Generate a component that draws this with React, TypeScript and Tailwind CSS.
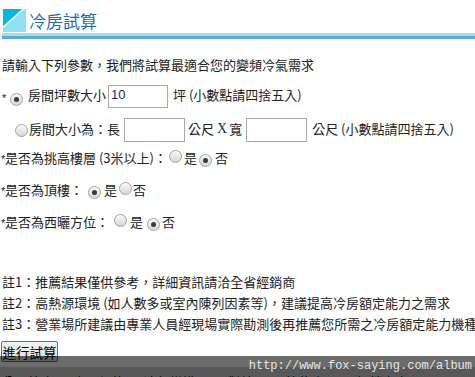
import React from "react";

const Radio = ({ checked }: { checked?: boolean }) => (
  <span className="inline-flex w-[13px] h-[13px] shrink-0 items-center justify-center rounded-full border border-[#a3a3a3] bg-linear-to-b from-[#fbfbfb] to-[#d6d6d6]">
    {checked && <span className="block w-[5px] h-[5px] rounded-full bg-[#3a3a3a]" />}
  </span>
);

const Star = () => (
  <span className="text-[11px] leading-[11px] w-[4px] mt-[3px] text-[#222] font-['Liberation_Sans',sans-serif]">*</span>
);

const Box = ({ value, w }: { value?: string; w: string }) => (
  <input
    readOnly
    value={value ?? ""}
    className={`${w} h-[23px] shrink-0 border border-[#a9a9a9] bg-white px-[2px] pb-[4px] text-[13px] text-[#102a6e] font-['Liberation_Sans',sans-serif] outline-none`}
  />
);

export default function App() {
  return (
    <div className="relative w-[475px] h-[377px] overflow-hidden bg-white text-[13px] text-[#222] font-['Noto_Sans_CJK_TC','Noto_Sans',sans-serif] whitespace-nowrap">
      {/* header */}
      <div className="flex items-start h-[33px] pt-[9px] pl-[3px]">
        <svg width="23" height="23" viewBox="0 0 23 23" className="shrink-0">
          <rect x="0" y="0" width="23" height="23" fill="#8fe0f4" />
          <polygon points="0,0 19,0 0,17" fill="#02b8e3" />
          <line x1="20.5" y1="0" x2="0" y2="18.5" stroke="#ffffff" strokeWidth="1.2" />
        </svg>
        <span className="ml-[3px] mt-[2px] text-[17px] leading-[20px] text-[#1e6db3]">冷房試算</span>
      </div>
      <div className="ml-[2px] h-[3px] bg-[#a8dcea]" />
      <div className="ml-[2px] h-[3px] bg-[#5aaad3]" />

      {/* row 1 */}
      <div className="mt-[16px] h-[20px] flex items-center pl-[2px] leading-[20px]">
        請輸入下列參數，我們將試算最適合您的變頻冷氣需求
      </div>

      {/* row 2 */}
      <div className="mt-[10px] h-[23px] flex items-center pl-[2px] leading-[18px]">
        <Star />
        <span className="ml-[4px]"><Radio checked /></span>
        <span className="ml-[5px] mb-[4px]">房間坪數大小</span>
        <span className="ml-[2px]"><Box w="w-[60px]" value="10" /></span>
        <span className="ml-[5px] mb-[4px]">坪 (小數點請四捨五入)</span>
      </div>

      {/* row 3 */}
      <div className="mt-[10px] h-[24px] flex items-center pl-[15px] leading-[18px]">
        <Radio />
        <span className="ml-[1px] mb-[2px]">房間大小為：長</span>
        <span className="ml-[4px]"><Box w="w-[61px] h-[24px]" /></span>
        <span className="ml-[3px] mb-[2px]">公尺</span>
        <span className="ml-[3px] mb-[2px] font-['Liberation_Serif',serif] text-[14px] text-[#1b2a5a]">X</span>
        <span className="ml-[2px] mb-[2px]">寬</span>
        <span className="ml-[4px]"><Box w="w-[61px] h-[24px]" /></span>
        <span className="ml-[5px] mb-[2px]">公尺 (小數點請四捨五入)</span>
      </div>

      {/* row 4 */}
      <div className="mt-[6px] h-[20px] flex items-center pl-[1px] leading-[20px]">
        <Star />
        <span>是否為挑高樓層 (3米以上)：</span>
        <span className="ml-[2px]"><Radio /></span>
        <span className="ml-[2px]">是</span>
        <span className="ml-[2px]"><Radio checked /></span>
        <span className="ml-[3px]">否</span>
      </div>

      {/* row 5 */}
      <div className="mt-[12px] h-[20px] flex items-center pl-[1px] leading-[20px]">
        <Star />
        <span>是否為頂樓：</span>
        <span className="ml-[5px]"><Radio checked /></span>
        <span className="ml-[3px]">是</span>
        <span className="ml-[2px]"><Radio /></span>
        <span className="ml-[1px]">否</span>
      </div>

      {/* row 6 */}
      <div className="mt-[12px] h-[20px] flex items-center pl-[1px] leading-[20px]">
        <Star />
        <span>是否為西曬方位：</span>
        <span className="ml-[5px]"><Radio /></span>
        <span className="ml-[3px]">是</span>
        <span className="ml-[4px]"><Radio checked /></span>
        <span className="ml-[2px]">否</span>
      </div>

      {/* notes */}
      <div className="mt-[39px] pl-[2px] flex flex-col leading-[21px]">
        <div className="h-[21px]">註1：推薦結果僅供參考，詳細資訊請洽全省經銷商</div>
        <div className="h-[21px]">註2：高熱源環境 (如人數多或室內陳列因素等)，建議提高冷房額定能力之需求</div>
        <div className="h-[21px]">註3：營業場所建議由專業人員經現場實際勘測後再推薦您所需之冷房額定能力機種</div>
      </div>

      {/* button */}
      <div className="mt-[7px] pl-[1px]">
        <button className="w-[57px] h-[21px] flex items-center justify-center border border-[#6e6e6e] rounded-[2px] bg-linear-to-b from-[#f4f4f4] to-[#dcdcdc] text-[13.5px] leading-[18px] text-black p-0">
          進行試算
        </button>
      </div>

      {/* footer links (mostly hidden) */}
      <div className="mt-[5px] h-[24px] bg-[#d2d2d2] pl-[2px] text-[13px] leading-[18px] pt-[6px] text-black">
        公司簡介 <span className="text-[#7a3a9a]">•</span> 產品規格 <span className="text-[#7a3a9a]">•</span> 冷氣常識 <span className="text-[#7a3a9a]">•</span> 派對特區 <span className="text-[#7a3a9a]">•</span> 節能產品 <span className="text-[#7a3a9a]">•</span> 經銷商專區 <span className="text-[#7a3a9a]">•</span>
      </div>

      {/* overlay bar */}
      <div className="absolute left-0 right-0 bottom-0 h-[21px] bg-black/[0.58] flex justify-end items-start pt-[3px] pr-[3px]">
        <span className="font-['Liberation_Mono',monospace] text-[12px] leading-[14px] text-[#e4e4e4]">
          http://www.fox-saying.com/album
        </span>
      </div>
    </div>
  );
}
